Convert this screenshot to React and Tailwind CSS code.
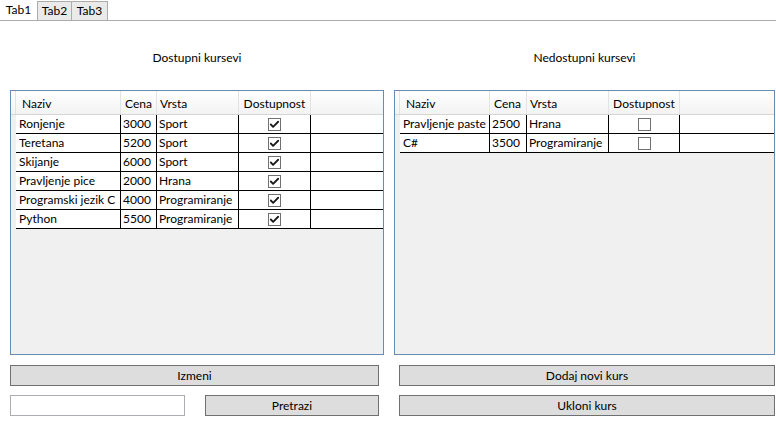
import { Check } from 'lucide-react'

const dostupni = [
  { naziv: 'Ronjenje', cena: 3000, vrsta: 'Sport', ok: true },
  { naziv: 'Teretana', cena: 5200, vrsta: 'Sport', ok: true },
  { naziv: 'Skijanje', cena: 6000, vrsta: 'Sport', ok: true },
  { naziv: 'Pravljenje pice', cena: 2000, vrsta: 'Hrana', ok: true },
  { naziv: 'Programski jezik C', cena: 4000, vrsta: 'Programiranje', ok: true },
  { naziv: 'Python', cena: 5500, vrsta: 'Programiranje', ok: true },
]

const nedostupni = [
  { naziv: 'Pravljenje paste', cena: 2500, vrsta: 'Hrana', ok: false },
  { naziv: 'C#', cena: 3500, vrsta: 'Programiranje', ok: false },
]

function Grid({ rows, widths }) {
  const [wn, wc, wv, wd] = widths
  return (
    <div className="h-[265px] border border-[#688caf] bg-[#f0f0f0] overflow-hidden">
      {/* header */}
      <div className="flex h-[24px] bg-gradient-to-b from-white to-[#f3f3f3] border-b border-[#d5d5d5]">
        <div className="w-[5px] border-r border-[#e3e3e3]" />
        {[['Naziv', wn, 'pl-[6px]'], ['Cena', wc, 'pl-[4px]'], ['Vrsta', wv, 'pl-[3px]'], ['Dostupnost', wd, 'justify-center']].map(([t, w, p]) => (
          <div key={t} style={{ width: w }} className={`flex items-center pt-[2px] border-r border-[#e3e3e3] ${p}`}>
            {t}
          </div>
        ))}
        <div className="flex-1" />
      </div>
      {rows.map((r) => (
        <div key={r.naziv} className="flex h-[19px] bg-white">
          <div className="w-[5px] bg-[#f0f0f0]" />
          <div className="flex border-b border-black">
            <div style={{ width: wn }} className="flex items-center pl-[3px] border-r border-black whitespace-nowrap overflow-hidden">{r.naziv}</div>
            <div style={{ width: wc }} className="flex items-center pl-[2px] border-r border-black">{r.cena}</div>
            <div style={{ width: wv }} className="flex items-center pl-[2px] border-r border-black whitespace-nowrap overflow-hidden">{r.vrsta}</div>
            <div style={{ width: wd }} className="flex items-center justify-center border-r border-black">
              <div className="w-[13px] h-[13px] border border-[#707070] bg-white flex items-center justify-center">
                {r.ok && <Check size={11} strokeWidth={4} className="text-[#1a1a1a]" />}
              </div>
            </div>
          </div>
          <div className="flex-1 border-b border-black" />
        </div>
      ))}
    </div>
  )
}

function Btn({ children, className = '' }) {
  return (
    <div className={`h-[21px] border border-[#707070] bg-[#dddddd] text-black font-normal flex items-center justify-center ${className}`}>
      {children}
    </div>
  )
}

export default function App() {
  return (
    <div className="w-[776px] h-[421px] bg-white text-[12px] text-black overflow-hidden" style={{ fontFamily: 'Lato, "Noto Sans", sans-serif' }}>
      {/* Tabs */}
      <div className="flex items-end h-[21px] border-b border-[#acacac]">
        <div className="w-[37px] h-[21px] flex items-center justify-center pt-[1px]">Tab1</div>
        <div className="w-[35px] h-[19px] border border-b-0 border-[#acacac] bg-[#eaeaea] flex items-center justify-center">Tab2</div>
        <div className="w-[36px] h-[19px] border border-b-0 border-l-0 border-[#acacac] bg-[#eaeaea] flex items-center justify-center">Tab3</div>
      </div>

      <div className="flex gap-[10px] pl-[10px] pr-[1px]">
        {/* left */}
        <div className="w-[374px] flex flex-col">
          <div className="h-[69px] flex items-center justify-center pt-[5px]">Dostupni kursevi</div>
          <Grid rows={dostupni} widths={[105, 36, 82, 72]} />
          <div className="pr-[5px] mt-[10px] flex flex-col gap-[9px]">
            <Btn>Izmeni</Btn>
            <div className="flex justify-between">
              <input className="w-[175px] h-[21px] border border-[#abadb3] outline-none" />
              <Btn className="w-[174px]">Pretrazi</Btn>
            </div>
          </div>
        </div>

        {/* right */}
        <div className="flex-1 flex flex-col">
          <div className="h-[69px] flex items-center justify-center pt-[5px]">Nedostupni kursevi</div>
          <Grid rows={nedostupni} widths={[90, 37, 82, 71]} />
          <div className="pl-[5px] mt-[10px] flex flex-col gap-[9px]">
            <Btn>Dodaj novi kurs</Btn>
            <Btn>Ukloni kurs</Btn>
          </div>
        </div>
      </div>
    </div>
  )
}
